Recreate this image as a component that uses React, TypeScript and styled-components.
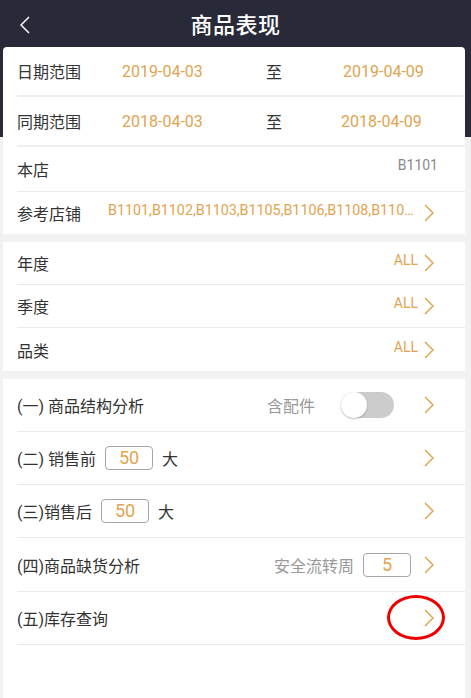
import styled, { createGlobalStyle } from "styled-components";

const ORANGE = "#e2a450";

const GlobalStyle = createGlobalStyle`
  html, body {
    margin: 0;
    padding: 0;
  }
  body {
    font-family: Roboto, "Noto Sans CJK SC", sans-serif;
    background: #f2f2f2;
  }
`;

interface IChevronProps {
  color?: string;
  flip?: boolean;
}

const Chevron: React.FC<IChevronProps> = ({ color = ORANGE, flip }) => (
  <ChevronSvg width={10} height={18} viewBox="0 0 10 18" $flip={flip}>
    <polyline points="1,1 9,9 1,17" fill="none" stroke={color} strokeWidth={1.5} />
  </ChevronSvg>
);

const DateRow: React.FC<{ label: string; from: string; to: string; shift?: boolean }> = ({
  label,
  from,
  to,
  shift,
}) => (
  <DateLine>
    <Label>{label}</Label>
    <DateValue>{from}</DateValue>
    <Label>至</Label>
    <DateValue $shift={shift}>{to}</DateValue>
  </DateLine>
);

const App = () => {
  return (
    <Page>
      <GlobalStyle />
      <Header>
        <BackButton>
          <Chevron color="#ffffff" flip />
        </BackButton>
        <Title>商品表现</Title>
        <span />
      </Header>

      <Content>
        <Card $rounded>
          <DateRow label="日期范围" from="2019-04-03" to="2019-04-09" />
          <DateRow label="同期范围" from="2018-04-03" to="2018-04-09" shift />
          <Row $h={44}>
            <Label>本店</Label>
            <Value $muted $lift={8} $pull>
              B1101
            </Value>
          </Row>
          <Row $h={42} $last>
            <Label>参考店铺</Label>
            <StoreList>B1101,B1102,B1103,B1105,B1106,B1108,B1109,B1110</StoreList>
            <Chevron />
          </Row>
        </Card>

        <Card>
          <Row $h={42}>
            <Label>年度</Label>
            <Value $lift={6}>ALL</Value>
            <Chevron />
          </Row>
          <Row $h={42}>
            <Label>季度</Label>
            <Value $lift={6}>ALL</Value>
            <Chevron />
          </Row>
          <Row $h={43} $last>
            <Label>品类</Label>
            <Value $lift={6}>ALL</Value>
            <Chevron />
          </Row>
        </Card>

        <Card $grow>
          <Row $h={52}>
            <Label>(一) 商品结构分析</Label>
            <Hint>含配件</Hint>
            <Toggle>
              <Knob />
            </Toggle>
            <Arrow>
              <Chevron />
            </Arrow>
          </Row>
          <Row $h={52}>
            <Label>(二) 销售前</Label>
            <NumberBox>50</NumberBox>
            <Label>大</Label>
            <Arrow $auto>
              <Chevron />
            </Arrow>
          </Row>
          <Row $h={52}>
            <Label>(三)销售后</Label>
            <NumberBox>50</NumberBox>
            <Label>大</Label>
            <Arrow $auto>
              <Chevron />
            </Arrow>
          </Row>
          <Row $h={53}>
            <Label>(四)商品缺货分析</Label>
            <Hint>安全流转周</Hint>
            <NumberBox>5</NumberBox>
            <Arrow $gap={4}>
              <Chevron />
            </Arrow>
          </Row>
          <Row $h={52}>
            <Label>(五)库存查询</Label>
            <Arrow $auto>
              <Chevron />
              <Mark />
            </Arrow>
          </Row>
        </Card>
      </Content>
    </Page>
  );
};

const Page = styled.div`
  min-height: 698px;
  display: flex;
  flex-direction: column;
  background: linear-gradient(#282a39 0, #282a39 137px, #f2f2f2 137px);
`;

const Header = styled.header`
  height: 47px;
  display: grid;
  grid-template-columns: 1fr auto 1fr;
  align-items: center;
`;

const BackButton = styled.div`
  display: flex;
  padding-left: 20px;
  padding-top: 2px;
`;

const Title = styled.h1`
  margin: 0 0 2px;
  color: #ffffff;
  font-size: 22px;
  font-weight: 500;
  letter-spacing: 0.5px;
`;

const Content = styled.main`
  flex: 1;
  display: flex;
  flex-direction: column;
  gap: 8px;
  padding: 0 6px 0 3px;
`;

const Card = styled.section<{ $rounded?: boolean; $grow?: boolean }>`
  background: #ffffff;
  border-radius: ${({ $rounded }) => ($rounded ? "4px 4px 0 0" : "0")};
  flex: ${({ $grow }) => ($grow ? 1 : "none")};
`;

const DateLine = styled.div`
  height: 48px;
  margin-left: 14px;
  border-bottom: 2px solid #eeeeee;
  display: grid;
  grid-template-columns: 105px 144px 77px 1fr;
  align-items: center;
`;

const Row = styled.div<{ $h: number; $last?: boolean }>`
  position: relative;
  height: ${({ $h }) => $h}px;
  margin-left: 14px;
  padding-right: 31px;
  display: flex;
  align-items: center;
  border-bottom: ${({ $last }) => ($last ? "none" : "1px solid #ebebeb")};
`;

const Label = styled.span`
  font-size: 16px;
  color: #333333;
  white-space: nowrap;
`;

const DateValue = styled.span<{ $shift?: boolean }>`
  font-size: 16px;
  color: ${ORANGE};
  margin-left: ${({ $shift }) => ($shift ? "-2px" : "0")};
`;

const Value = styled.span<{ $muted?: boolean; $lift?: number; $pull?: boolean }>`
  margin-left: auto;
  margin-right: ${({ $pull }) => ($pull ? "-4px" : "6px")};
  margin-bottom: ${({ $lift }) => $lift ?? 0}px;
  font-size: 14px;
  color: ${({ $muted }) => ($muted ? "#888888" : ORANGE)};
`;

const StoreList = styled.span`
  flex: 1;
  min-width: 0;
  margin: 0 6px 6px 27px;
  font-size: 14.3px;
  color: ${ORANGE};
  white-space: nowrap;
  overflow: hidden;
  text-overflow: ellipsis;
`;

const Hint = styled.span`
  margin-left: auto;
  font-size: 16px;
  color: #999999;
`;

const Toggle = styled.div`
  width: 53px;
  height: 26px;
  margin-left: 26px;
  border-radius: 13px;
  background: #cccccc;
  display: flex;
  align-items: center;
`;

const Knob = styled.div`
  width: 26px;
  height: 26px;
  border-radius: 50%;
  background: #ffffff;
  box-shadow: 0 1px 2px rgba(0, 0, 0, 0.25);
`;

const NumberBox = styled.div`
  box-sizing: border-box;
  width: 48px;
  height: 24px;
  margin: 0 9px;
  border: 1px solid #a6a6a6;
  border-radius: 4px;
  font-size: 18px;
  line-height: 22px;
  text-align: center;
  color: ${ORANGE};
`;

const Arrow = styled.div<{ $auto?: boolean; $gap?: number }>`
  position: relative;
  display: flex;
  margin-left: ${({ $auto, $gap }) => ($auto ? "auto" : `${$gap ?? 30}px`)};
`;

const ChevronSvg = styled.svg<{ $flip?: boolean }>`
  display: block;
  transform: ${({ $flip }) => ($flip ? "scaleX(-1)" : "none")};
`;

const Mark = styled.div`
  position: absolute;
  left: -37px;
  top: -14px;
  box-sizing: border-box;
  width: 58px;
  height: 45px;
  border: 3px solid #ee0000;
  border-radius: 50%;
`;

export default App;
